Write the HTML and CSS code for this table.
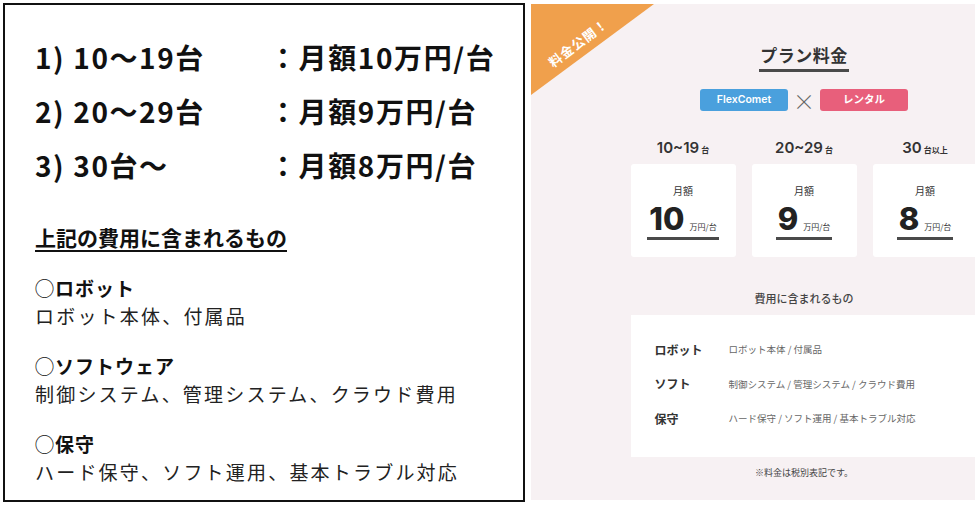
FILE: index.html
```html
<!DOCTYPE html>
<html lang="ja">
<head>
  <meta charset="UTF-8">
  <title>料金プラン</title>
  <link rel="stylesheet" href="styles.css">
</head>
<body>
  <div class="page">
    <div class="memo">
      <div class="price-list">
        <div>1) 10～19台</div><div>：月額10万円/台</div>
        <div>2) 20～29台</div><div>：月額9万円/台</div>
        <div>3) 30台～</div><div>：月額8万円/台</div>
      </div>
      <div class="memo-title">上記の費用に含まれるもの</div>
      <div class="memo-item">
        <div class="memo-head">◯ロボット</div>
        <div class="memo-body">ロボット本体、付属品</div>
      </div>
      <div class="memo-item">
        <div class="memo-head">◯ソフトウェア</div>
        <div class="memo-body">制御システム、管理システム、クラウド費用</div>
      </div>
      <div class="memo-item">
        <div class="memo-head">◯保守</div>
        <div class="memo-body">ハード保守、ソフト運用、基本トラブル対応</div>
      </div>
    </div>

    <div class="panel">
      <div class="ribbon"><span>料金公開！</span></div>
      <div class="panel-inner">
        <h2 class="plan-title">プラン料金</h2>
        <div class="badges">
          <span class="badge blue">FlexComet</span>
          <span class="cross">×</span>
          <span class="badge red">レンタル</span>
        </div>

        <div class="tiers">
          <div class="tier">
            <div class="tier-label">10~19<small>台</small></div>
            <div class="card">
              <div class="card-sub">月額</div>
              <div class="amount"><b>10</b><span>万円/台</span></div>
            </div>
          </div>
          <div class="tier">
            <div class="tier-label">20~29<small>台</small></div>
            <div class="card">
              <div class="card-sub">月額</div>
              <div class="amount"><b>9</b><span>万円/台</span></div>
            </div>
          </div>
          <div class="tier">
            <div class="tier-label">30<small>台以上</small></div>
            <div class="card">
              <div class="card-sub">月額</div>
              <div class="amount"><b>8</b><span>万円/台</span></div>
            </div>
          </div>
        </div>

        <div class="incl-title">費用に含まれるもの</div>
        <div class="incl-box">
          <div class="incl-row"><div class="incl-label">ロボット</div><div class="incl-desc">ロボット本体 / 付属品</div></div>
          <div class="incl-row"><div class="incl-label">ソフト</div><div class="incl-desc">制御システム / 管理システム / クラウド費用</div></div>
          <div class="incl-row"><div class="incl-label">保守</div><div class="incl-desc">ハード保守 / ソフト運用 / 基本トラブル対応</div></div>
        </div>
        <div class="note">※料金は税別表記です。</div>
      </div>
    </div>
  </div>
</body>
</html>
```

FILE: styles.css
```css
body {
  margin: 0;
  background: #fff;
  font-family: "Noto Sans CJK JP", "Noto Sans", sans-serif;
  color: #111;
}
.page {
  display: flex;
  align-items: flex-start;
  padding: 3px 0 0 3px;
}
.memo {
  box-sizing: border-box;
  width: 522px;
  height: 499px;
  border: 2px solid #111;
  padding: 25px 0 0 30px;
}
.price-list {
  display: grid;
  grid-template-columns: 234px auto;
  font-size: 28px;
  font-weight: bold;
  line-height: 54px;
  letter-spacing: 1.6px;
}
.memo-title {
  margin-top: 30px;
  font-size: 21px;
  font-weight: bold;
  line-height: 30px;
  text-decoration: underline;
  text-underline-offset: 4px;
}
.memo-item {
  margin-top: 22px;
  font-size: 19px;
  line-height: 27.5px;
}
.memo-item + .memo-item {
  margin-top: 23px;
}
.memo-head {
  font-weight: bold;
  letter-spacing: 1px;
}
.memo-body {
  letter-spacing: 2.2px;
  color: #222;
}

.panel {
  position: relative;
  margin: 1px 0 0 6px;
  width: 444px;
  height: 496px;
  overflow: hidden;
  background: #f7f1f3;
}
.ribbon {
  position: absolute;
  left: 0;
  top: 0;
  width: 123px;
  height: 91px;
  background: #f0a04c;
  clip-path: polygon(0 0, 100% 0, 0 100%);
}
.ribbon span {
  position: absolute;
  left: 12px;
  top: 29px;
  color: #fff;
  font-size: 13px;
  font-weight: bold;
  transform: rotate(-37deg);
  letter-spacing: 1px;
}
.panel-inner {
  width: 546px;
  padding-top: 39px;
  text-align: center;
  color: #333;
}
.plan-title {
  display: inline-block;
  margin: 0;
  font-size: 17px;
  line-height: 24px;
  padding: 0 1px 2px;
  border-bottom: 3px solid #4a4a4a;
  letter-spacing: 0.5px;
}
.badges {
  display: flex;
  justify-content: center;
  align-items: center;
  margin-top: 17px;
}
.badge {
  width: 88px;
  height: 22px;
  line-height: 22px;
  border-radius: 3px;
  color: #fff;
  font-size: 10.5px;
  font-weight: 600;
  font-family: "Inter", "Noto Sans CJK JP", sans-serif;
}
.blue { background: #4aa0dd; }
.red { background: #e85f7b; }
.cross {
  width: 32px;
  font-size: 22px;
  font-weight: 300;
  color: #666;
  line-height: 22px;
}
.tiers {
  display: flex;
  justify-content: center;
  gap: 16px;
  margin-top: 27px;
}
.tier {
  width: 105px;
}
.tier-label {
  font-family: "Inter", "Noto Sans CJK JP", sans-serif;
  font-size: 15px;
  font-weight: 600;
  line-height: 20px;
  color: #333;
}
.tier-label small {
  font-size: 8px;
  margin-left: 2px;
}
.card {
  margin-top: 4px;
  height: 93px;
  background: #fff;
  border-radius: 3px;
  padding-top: 20px;
  box-sizing: border-box;
}
.card-sub {
  font-size: 10px;
  line-height: 14px;
  color: #333;
}
.amount {
  display: inline-flex;
  align-items: baseline;
  gap: 5px;
  margin-top: 3px;
  padding: 0 2px 0;
  border-bottom: 3px solid #4a4a4a;
}
.amount b {
  font-family: "Inter", sans-serif;
  font-size: 31px;
  font-weight: 800;
  line-height: 36px;
  color: #222;
}
.amount span {
  font-size: 8px;
  color: #333;
}
.incl-title {
  margin-top: 33px;
  font-size: 11px;
  font-weight: 500;
  line-height: 16px;
  color: #444;
}
.incl-box {
  width: 347px;
  margin: 9px auto 0;
  height: 142px;
  box-sizing: border-box;
  background: #fff;
  padding: 17px 0 0 24px;
  text-align: left;
}
.incl-row {
  display: flex;
  align-items: center;
  height: 34.5px;
}
.incl-label {
  width: 74px;
  font-size: 12px;
  font-weight: bold;
  color: #333;
}
.incl-desc {
  font-size: 9.5px;
  color: #666;
}
.note {
  margin-top: 9px;
  font-size: 9px;
  line-height: 14px;
  color: #444;
}
```
